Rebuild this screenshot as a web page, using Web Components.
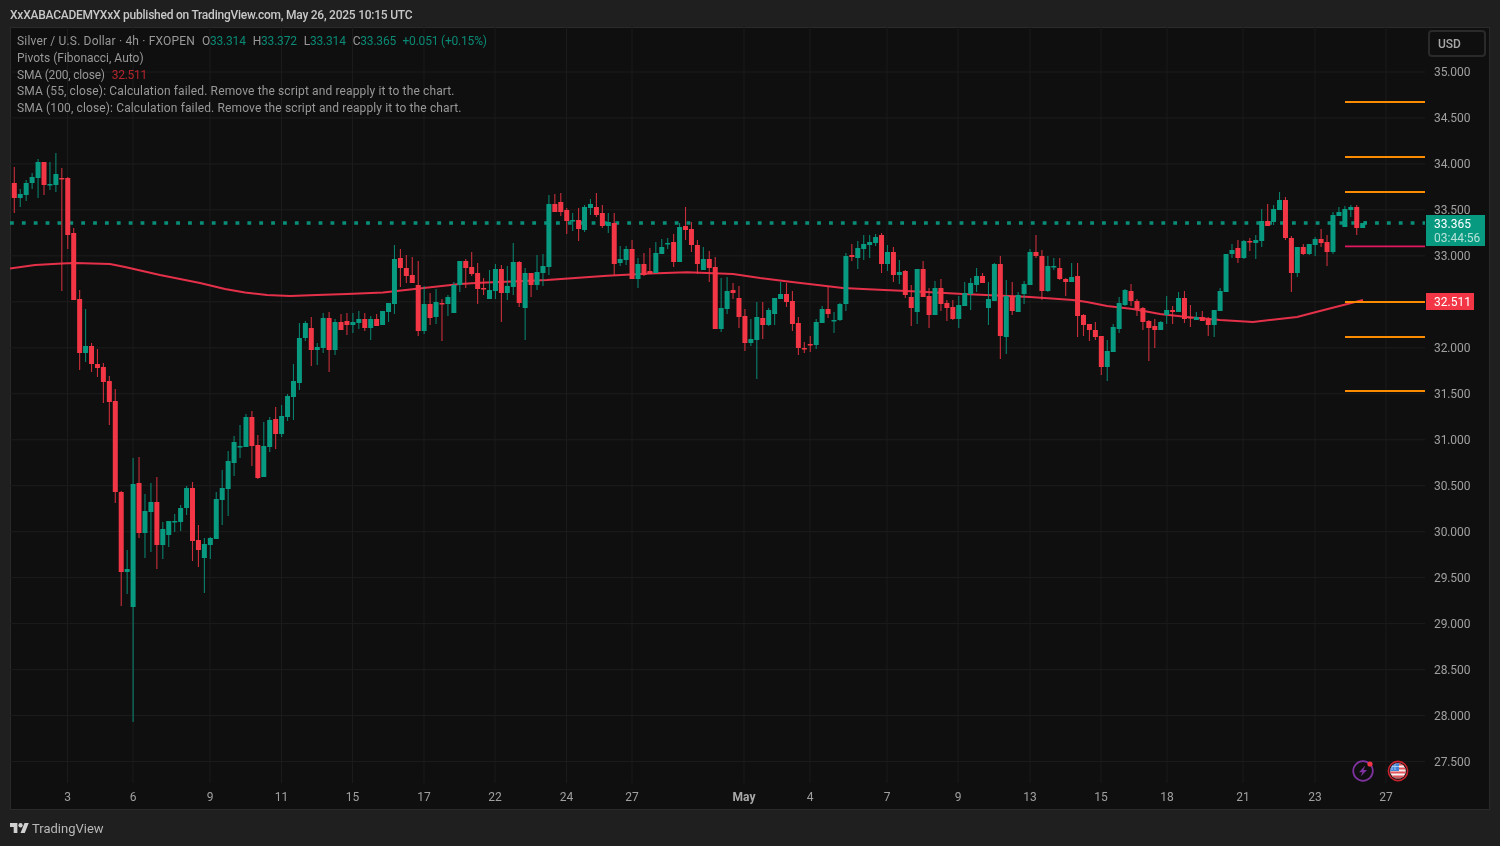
<!DOCTYPE html>
<html>
<head>
<meta charset="utf-8">
<title>Silver / U.S. Dollar</title>
<style>
  html, body { margin: 0; padding: 0; background: #1f1f1f; }
</style>
</head>
<body>
<tv-page>
  <tv-header slot="header">XxXABACADEMYXxX published on TradingView.com, May 26, 2025 10:15 UTC</tv-header>
  <tv-chart slot="chart"></tv-chart>
  <tv-footer slot="footer">TradingView</tv-footer>
</tv-page>

<script>
// x top bottom high low colour, all in page pixels
const CANDLES = `14 183 198 167 213 r|20 194 198 189 207 g|26 183 195 180 201 g|32 177 183 173 189 g|38 162 178 159 198 g|44 162 185 162 195 r|50 184 185 162 190 g|56 174 185 153 192 g|62 178 179 168 291 r|68 178 235 177 249 r|74 233 300 228 300 r|80 299 353 290 370 r|86 346 353 309 362 g|91 346 364 343 372 r|97 364 368 349 377 r|103 367 382 363 403 r|109 381 402 376 425 r|115 401 492 389 503 r|121 492 572 491 606 r|127 569 572 550 594 g|133 484 607 458 722 g|139 483 533 457 538 r|145 511 533 494 558 g|151 502 512 483 552 g|157 502 545 477 569 r|163 529 545 522 559 g|169 521 535 521 547 g|175 521 522 514 532 g|180 508 522 505 531 g|186 488 508 486 515 g|192 488 541 482 561 r|198 540 550 525 567 r|204 544 558 538 593 g|210 538 545 537 559 g|216 499 539 492 539 g|222 488 500 470 525 g|228 461 489 451 516 g|234 442 463 436 476 g|240 446 447 425 458 g|246 417 447 414 447 g|252 417 446 411 466 r|258 445 478 435 479 r|264 446 477 422 477 g|270 420 447 417 452 g|276 419 434 407 449 r|282 416 434 405 437 g|288 396 417 394 421 g|293 381 397 364 420 g|299 338 383 323 390 g|305 323 338 321 341 g|311 328 350 317 366 r|317 347 350 343 365 g|323 318 348 313 353 g|329 318 350 312 372 r|335 322 350 319 355 g|341 322 330 314 330 r|347 321 325 313 335 r|353 322 325 313 333 g|359 319 323 311 329 g|365 319 328 313 331 r|371 319 328 316 340 g|377 319 326 314 326 r|383 311 325 311 325 g|389 303 312 303 322 g|395 259 304 245 314 g|401 258 268 249 287 r|407 268 276 255 283 r|412 275 283 257 283 r|418 285 331 261 336 r|424 304 331 286 334 g|430 304 318 293 325 r|436 302 317 289 324 g|442 303 304 299 341 r|448 297 304 295 316 g|454 285 313 282 313 g|460 261 285 261 292 g|466 261 268 259 288 r|472 267 274 252 276 r|478 273 289 263 304 r|483 288 289 278 295 r|489 290 299 270 299 g|495 269 291 264 299 g|501 269 293 265 322 r|507 286 293 266 300 g|513 262 287 243 295 g|519 262 303 261 307 r|525 273 308 268 340 g|531 273 285 273 297 r|537 272 285 255 290 g|543 266 273 254 286 g|549 204 267 195 275 g|555 204 212 194 212 r|561 202 212 193 216 r|567 210 221 208 234 r|573 220 221 213 231 g|579 220 229 208 241 r|585 207 230 205 232 g|591 204 208 199 215 g|597 207 215 193 217 r|602 213 226 205 228 r|608 222 226 213 233 g|614 223 264 213 276 r|620 259 263 246 266 g|626 249 260 246 265 g|632 249 279 240 279 r|638 264 279 258 288 g|644 264 275 253 276 r|650 271 274 248 274 r|656 253 273 242 273 g|662 247 254 239 254 g|668 243 244 238 249 g|674 242 262 234 267 r|680 227 262 223 262 g|686 226 230 207 240 r|692 229 245 222 252 r|698 245 264 240 274 r|703 259 270 247 270 g|709 259 268 251 282 r|715 267 329 257 329 r|721 308 329 278 332 g|727 291 309 277 314 g|733 290 293 283 299 r|739 298 317 286 328 r|745 316 343 309 351 r|751 339 343 319 346 g|757 317 340 302 379 g|763 318 325 302 339 r|769 310 325 308 326 g|775 298 314 298 325 g|781 294 299 282 299 g|787 294 302 283 307 r|792 301 324 291 331 r|798 323 348 317 355 r|804 348 349 342 353 r|810 344 345 336 352 r|816 322 345 319 349 g|822 309 323 306 323 g|828 309 314 286 318 r|834 320 321 312 333 g|840 304 320 303 321 g|846 256 304 253 311 g|852 255 257 244 261 r|858 248 258 241 269 g|864 244 249 235 260 g|870 242 245 235 258 g|876 237 243 234 246 g|882 235 264 233 273 r|888 252 264 245 271 g|894 252 275 247 282 r|900 272 275 260 284 g|905 271 295 270 298 r|911 297 308 285 326 r|917 269 312 269 324 g|923 269 297 261 297 r|929 296 315 288 328 r|935 288 315 281 315 g|941 288 304 279 311 r|947 303 308 300 321 r|953 307 319 300 320 r|959 305 319 296 328 g|965 293 306 282 306 g|971 283 294 278 310 g|977 276 285 268 292 g|983 276 283 273 283 r|989 299 308 282 325 g|995 264 301 263 301 g|1001 264 336 256 359 r|1007 296 337 280 354 g|1013 296 311 282 315 r|1018 295 312 292 312 g|1024 284 294 281 304 g|1030 252 285 249 285 g|1036 252 256 235 258 r|1042 256 291 250 300 r|1048 266 291 256 292 g|1054 266 267 258 270 g|1060 268 279 258 280 r|1066 279 282 278 296 r|1072 277 282 263 282 g|1078 276 316 263 337 r|1084 315 325 314 336 r|1090 324 330 324 341 r|1096 330 337 322 340 r|1102 336 367 336 375 r|1108 351 367 340 381 g|1114 327 352 324 352 g|1120 303 329 297 333 g|1126 290 305 289 306 g|1131 291 301 284 306 r|1137 301 309 299 316 r|1143 308 322 307 330 r|1149 321 328 320 361 r|1155 326 330 319 348 r|1161 322 330 321 330 g|1167 310 315 296 324 g|1173 310 312 306 324 r|1179 298 312 292 312 g|1185 298 319 291 323 r|1191 317 318 305 327 r|1197 317 320 312 320 g|1203 317 321 311 321 r|1209 319 325 317 336 r|1215 310 325 310 337 g|1220 291 311 288 311 g|1226 254 292 254 292 g|1232 250 254 244 258 g|1238 248 258 240 263 r|1244 241 258 240 259 g|1250 241 242 238 251 r|1256 240 243 235 259 g|1262 221 241 209 247 g|1268 221 226 204 226 r|1274 209 222 205 225 g|1280 200 210 192 210 g|1286 200 238 197 240 r|1292 238 273 236 292 r|1298 247 273 247 277 g|1304 247 254 244 255 r|1310 244 254 244 255 g|1315 239 245 237 256 g|1321 239 243 229 247 r|1327 242 252 235 266 r|1333 215 252 212 254 g|1339 212 216 207 216 g|1345 209 227 206 227 g|1351 207 210 205 217 g|1357 207 228 205 235 r|1363 223 228 223 228 g`;

const SMA = [[10,268.5],[35,265],[62,263.5],[75,263],[110,264],[125,267],[160,275],[200,283],[225,289],[245,292.5],[267,295],[290,296],[317,295],[347,294],[383,292.5],[417,288.7],[460,284],[480,282.7],[547,280],[607,275.7],[650,273.5],[687,272.3],[733,274],[760,278],[790,281.7],[843,288],[863,289],[917,291.5],[963,294],[1030,297],[1073,300],[1087,302],[1107,306],[1133,309],[1160,314],[1187,317],[1220,320],[1253,322],[1297,317],[1320,311],[1363,300]];

const PRICE_ROWS = ['35.000','34.500','34.000','33.500','33.000','32.500','32.000','31.500','31.000','30.500','30.000','29.500','29.000','28.500','28.000','27.500'];
const TIME_TICKS = [[67.5,'3'],[133,'6'],[210,'9'],[281.5,'11'],[352.5,'15'],[424,'17'],[495,'22'],[566.5,'24'],[632,'27'],[744,'May'],[810,'4'],[887,'7'],[958,'9'],[1030,'13'],[1101,'15'],[1167,'18'],[1243,'21'],[1315,'23'],[1386,'27']];
const PIVOTS = [[102,'#fb8c00'],[157,'#fb8c00'],[192,'#fb8c00'],[246.3,'#e0195f'],[302,'#fb8c00'],[337,'#fb8c00'],[391,'#fb8c00']];

const FONT = 'Roboto, "Liberation Sans", sans-serif';

class TvPage extends HTMLElement {
  constructor() {
    super();
    this.attachShadow({mode: 'open'}).innerHTML = `
      <style>
        :host { display: flex; flex-direction: column; width: 1500px; height: 846px; background: #1f1f1f; overflow: hidden; font-family: ${FONT}; filter: blur(.35px); }
        .chart { flex: 1; display: flex; padding: 0 10px; min-height: 0; }
      </style>
      <slot name="header"></slot>
      <div class="chart"><slot name="chart"></slot></div>
      <slot name="footer"></slot>`;
  }
}

class TvHeader extends HTMLElement {
  constructor() {
    super();
    this.attachShadow({mode: 'open'}).innerHTML = `
      <style>
        :host { display: flex; align-items: center; height: 27px; padding: 2px 10px 0; box-sizing: border-box; font-size: 12px; font-weight: 500; letter-spacing: -.24px; color: #c8c8c8; }
      </style>
      <slot></slot>`;
  }
}

class TvFooter extends HTMLElement {
  constructor() {
    super();
    this.attachShadow({mode: 'open'}).innerHTML = `
      <style>
        :host { display: flex; align-items: center; gap: 3px; height: 36px; padding: 0 10px; box-sizing: border-box; font-size: 13px; color: #b8b8b8; }
        svg { width: 19px; height: 10px; display: block; }
      </style>
      <svg viewBox="0 4 36 18" preserveAspectRatio="none" aria-hidden="true"><path fill="#d0d0d0" d="M14 22H7V11H0V4h14v18zM28 22h-8l7.5-18h8L28 22z"/><circle fill="#d0d0d0" cx="20" cy="8" r="4"/></svg>
      <span><slot></slot></span>`;
  }
}

class TvLegend extends HTMLElement {
  constructor() {
    super();
    this.attachShadow({mode: 'open'}).innerHTML = `
      <style>
        :host { display: flex; flex-direction: column; font-size: 12px; line-height: 16.75px; color: #989898; white-space: nowrap; }
        .row { display: flex; }
        .wide { letter-spacing: .13px; }
        .title { letter-spacing: .17px; }
        .narrow { letter-spacing: -.2px; }
        .up { color: #0a8a75; }
        .down { color: #b5252f; margin-left: 7px; letter-spacing: -.3px; }
        .ohlc { margin-left: 7px; letter-spacing: -.2px; }
        .chg { margin-left: 6.5px; letter-spacing: -.2px; }
      </style>
      <div class="row"><span class="title">Silver / U.S. Dollar · 4h · FXOPEN</span>
        <span class="ohlc">O<span class="up">33.314</span></span>
        <span class="ohlc">H<span class="up">33.372</span></span>
        <span class="ohlc">L<span class="up">33.314</span></span>
        <span class="ohlc">C<span class="up">33.365</span></span>
        <span class="chg up">+0.051 (+0.15%)</span></div>
      <div class="row">Pivots (Fibonacci, Auto)</div>
      <div class="row"><span class="narrow">SMA (200, close)</span><span class="down">32.511</span></div>
      <div class="row wide">SMA (55, close): Calculation failed. Remove the script and reapply it to the chart.</div>
      <div class="row wide">SMA (100, close): Calculation failed. Remove the script and reapply it to the chart.</div>`;
  }
}

class TvPriceAxis extends HTMLElement {
  constructor() {
    super();
    this.attachShadow({mode: 'open'}).innerHTML = `
      <style>
        :host { display: flex; flex-direction: column; font-size: 12px; letter-spacing: -.1px; color: #a0a0a0; }
        div { height: 45.97px; line-height: 45.97px; }
      </style>
      ${PRICE_ROWS.map(p => `<div>${p}</div>`).join('')}`;
  }
}

class TvPriceTag extends HTMLElement {
  constructor() {
    super();
    this.attachShadow({mode: 'open'}).innerHTML = `
      <style>
        :host { display: flex; flex-direction: column; justify-content: center; box-sizing: border-box; padding: 0 5px 0 8px; font-size: 12px; line-height: 14px; color: #fff; background: var(--tag, #089981); }
        ::slotted(small) { font-size: 12px; color: #b5e2d8; }
      </style>
      <slot></slot>`;
  }
}

class TvCandles extends HTMLElement {
  constructor() {
    super();
    const s = [];
    for (const [y] of PRICE_ROWS.map((p, i) => [72 + i * 45.97])) s.push(`<path d="M10 ${y}H1425" stroke="#1d1d1d"/>`);
    for (const [x] of TIME_TICKS) s.push(`<path d="M${x} 27V783" stroke="#1b1b1b"/>`);
    s.push(`<path d="M10 223H1425" stroke="#089981" stroke-width="3.6" stroke-dasharray="3.8 8.07" opacity=".92"/>`);
    s.push(`<polyline points="${SMA.map(p => p.join(',')).join(' ')}" fill="none" stroke="#e5304a" stroke-width="2" stroke-linejoin="round"/>`);
    for (const [y, c] of PIVOTS) s.push(`<path d="M1345 ${y}H1425" stroke="${c}" stroke-width="1.8"/>`);
    for (const row of CANDLES.split('|')) {
      const [x0, t, b, h, l, c] = row.split(' ');
      const x = 14.3 + 5.94 * Math.round((x0 - 14.3) / 5.94);
      const col = c === 'g' ? '#089981' : '#f23645';
      s.push(`<path d="M${x} ${h}V${l}" stroke="${col}" stroke-width="1.1" opacity=".82"/>`);
      s.push(`<rect x="${x - 2.5}" y="${t}" width="5" height="${Math.max(b - t, 1.5)}" fill="${col}"/>`);
    }
    s.push(`<rect x="1364" y="221.3" width="3" height="3" fill="#089981"/>`);
    this.attachShadow({mode: 'open'}).innerHTML = `
      <style>
        :host { display: block; position: absolute; inset: 0; }
        svg { display: block; width: 100%; height: 100%; }
      </style>
      <svg viewBox="10 27 1480 783" aria-hidden="true">${s.join('')}</svg>`;
  }
}

class TvTimeAxis extends HTMLElement {
  constructor() {
    super();
    this.attachShadow({mode: 'open'}).innerHTML = `
      <style>
        :host { display: block; position: absolute; left: 0; right: 0; top: 762px; height: 16px; font-size: 12px; color: #a0a0a0; }
        span { position: absolute; top: 0; line-height: 16px; transform: translateX(-50%); }
        .month { font-weight: 700; color: #a8a8a8; }
      </style>
      ${TIME_TICKS.map(([x, t]) => `<span class="${t === 'May' ? 'month' : ''}" style="left:${x - 10}px">${t}</span>`).join('')}`;
  }
}

class TvEventMarks extends HTMLElement {
  constructor() {
    super();
    this.attachShadow({mode: 'open'}).innerHTML = `
      <style>
        :host { display: flex; gap: 13px; position: absolute; left: 1342px; top: 733px; }
        svg { display: block; width: 22px; height: 22px; }
      </style>
      <svg viewBox="0 0 22 22" aria-hidden="true">
        <circle cx="11" cy="11" r="9.8" fill="none" stroke="#7f33a0" stroke-width="1.7"/>
        <path d="M13.2 5.6 7 12.2h3.4L8.8 16.6 15 10h-3.4z" fill="#7f33a0"/>
        <circle cx="18" cy="4" r="2.6" fill="#f23645"/>
      </svg>
      <svg viewBox="0 0 22 22" aria-hidden="true">
        <defs><clipPath id="f"><circle cx="11" cy="11" r="7.8"/></clipPath></defs>
        <g clip-path="url(#f)">
          <rect x="2" y="2" width="18" height="18" fill="#f4f0f0"/>
          <path d="M2 4.4h18M2 8.4h18M2 12.4h18M2 16.4h18" stroke="#e4545c" stroke-width="2"/>
          <path d="M2 18.6h18" stroke="#8a2a30" stroke-width="2.4"/>
          <rect x="2" y="2" width="10" height="9" fill="#3f83d6"/>
          <path d="M5 4v6M8 4v6M3 6.5h9" stroke="#b8d4f2" stroke-width=".8"/>
        </g>
        <circle cx="11" cy="11" r="9.6" fill="none" stroke="#c9222f" stroke-width="1.6"/>
      </svg>`;
  }
}

class TvChart extends HTMLElement {
  constructor() {
    super();
    this.attachShadow({mode: 'open'}).innerHTML = `
      <style>
        :host { display: block; position: relative; flex: 1; background: #0f0f0f; box-shadow: inset 0 0 0 1px #2a2a2a; overflow: hidden; }
        tv-legend { position: absolute; left: 7px; top: 6px; }
        tv-price-axis { position: absolute; left: 1424px; top: 23px; }
        .usd { position: absolute; left: 1418px; top: 3px; width: 58px; height: 27px; box-sizing: border-box; border: 2px solid #2a2a2a; border-radius: 4px; padding-left: 8px; font-size: 12px; font-weight: 500; line-height: 25px; color: #a8a8a8; }
        .last { position: absolute; left: 1416px; top: 188px; width: 59px; height: 31px; }
        .sma { position: absolute; left: 1416px; top: 266px; width: 48px; height: 17px; --tag: #f23645; }
      </style>
      <tv-candles></tv-candles>
      <tv-legend></tv-legend>
      <tv-price-axis></tv-price-axis>
      <div class="usd">USD</div>
      <tv-price-tag class="last">33.365<small>03:44:56</small></tv-price-tag>
      <tv-price-tag class="sma">32.511</tv-price-tag>
      <tv-time-axis></tv-time-axis>
      <tv-event-marks></tv-event-marks>`;
  }
}

customElements.define('tv-page', TvPage);
customElements.define('tv-header', TvHeader);
customElements.define('tv-footer', TvFooter);
customElements.define('tv-legend', TvLegend);
customElements.define('tv-price-axis', TvPriceAxis);
customElements.define('tv-price-tag', TvPriceTag);
customElements.define('tv-candles', TvCandles);
customElements.define('tv-time-axis', TvTimeAxis);
customElements.define('tv-event-marks', TvEventMarks);
customElements.define('tv-chart', TvChart);
</script>
</body>
</html>
